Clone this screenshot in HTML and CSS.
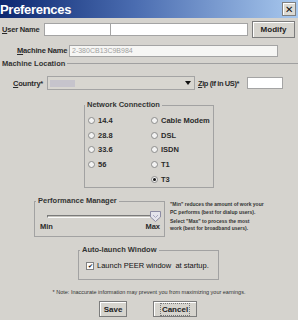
FILE: index.html
```html
<!DOCTYPE html>
<html lang="en">
<head>
    <meta charset="UTF-8">
    <title>Preferences</title>
    <link rel="stylesheet" href="styles.css">
</head>
<body>
    <div class="titlebar">
        <span class="title">Preferences</span>
        <span class="close">&#x2715;</span>
    </div>

    <div class="row user-row">
        <label class="lbl user-lbl"><u>U</u>ser Name</label>
        <input type="text" class="field f-first">
        <input type="text" class="field f-second">
        <button class="btn modify">Modify</button>
    </div>

    <div class="row machine-row">
        <label class="lbl machine-lbl"><u>M</u>achine Name</label>
        <input type="text" class="field machine" value="2-380CB13C9B984" disabled>
    </div>

    <div class="sep-title"><span>Machine Location</span></div>

    <div class="row country-row">
        <label class="lbl country-lbl"><u>C</u>ountry*</label>
        <div class="combo">
            <span class="combo-val"></span>
            <span class="arrow"></span>
        </div>
        <label class="lbl zip-lbl"><u>Z</u>ip (If in US)*</label>
        <input type="text" class="field zip">
    </div>

    <fieldset class="group network">
        <legend>Network Connection</legend>
        <div class="radio-cols">
            <div class="radio-col first-col">
                <div class="radio"><span class="dot"></span>14.4</div>
                <div class="radio"><span class="dot"></span>28.8</div>
                <div class="radio"><span class="dot"></span>33.6</div>
                <div class="radio"><span class="dot"></span>56</div>
            </div>
            <div class="radio-col">
                <div class="radio"><span class="dot"></span>Cable Modem</div>
                <div class="radio"><span class="dot"></span>DSL</div>
                <div class="radio"><span class="dot"></span>ISDN</div>
                <div class="radio"><span class="dot"></span>T1</div>
                <div class="radio"><span class="dot checked"></span>T3</div>
            </div>
        </div>
    </fieldset>

    <div class="perf-row">
        <fieldset class="group perf">
            <legend>Performance Manager</legend>
            <div class="slider">
                <span class="track"></span>
                <svg class="thumb" width="11" height="11" viewBox="0 0 11 11">
                    <path d="M0.5 0.5 H10.5 V6 L5.5 10.5 L0.5 6 Z" fill="#e4e4ec" stroke="#8c8ca4"/>
                    <path d="M3 4 L5.5 6.5 L8 4" fill="none" stroke="#a8a8c0"/>
                </svg>
            </div>
            <div class="slider-labels">
                <span>Min</span>
                <span>Max</span>
            </div>
        </fieldset>
        <div class="perf-help">
            <p>"Min" reduces the amount of work your<br>PC performs (best for dialup users).</p>
            <p>Select "Max" to process the most<br>work (best for broadband users).</p>
        </div>
    </div>

    <fieldset class="group autolaunch">
        <legend>Auto-launch Window</legend>
        <div class="check-row">
            <span class="checkbox">&#x2714;</span>
            <span>Launch PEER window &nbsp;at startup.</span>
        </div>
    </fieldset>

    <p class="note">* Note: Inaccurate information may prevent you from maximizing your earnings.</p>

    <div class="buttons">
        <button class="btn save">Save</button>
        <button class="btn cancel"><span class="focus">Cancel</span></button>
    </div>
</body>
</html>
```

FILE: styles.css
```css
* {
    box-sizing: border-box;
}
body {
    margin: 0;
    width: 298px;
    height: 320px;
    overflow: hidden;
    background-color: #d5d3ce;
    font-family: "Liberation Sans", Arial, sans-serif;
    font-size: 7.5px;
    font-weight: bold;
    color: #2a2a2a;
    white-space: nowrap;
}
.titlebar {
    height: 18px;
    display: flex;
    align-items: center;
    justify-content: space-between;
    padding-right: 2px;
    background: linear-gradient(90deg, #0c2870 0%, #4a6cb0 45%, #a8c8ee 100%);
}
.title {
    color: white;
    font-size: 13px;
    font-weight: 900;
    letter-spacing: -0.3px;
}
.close {
    width: 14px;
    height: 14px;
    display: flex;
    align-items: center;
    justify-content: center;
    background: #dcdad4;
    border: 1px solid #808080;
    box-shadow: inset 1px 1px #fff;
    color: #111;
    font-size: 10px;
    font-weight: normal;
}
.row {
    display: flex;
    align-items: center;
}
.lbl {
    letter-spacing: -0.2px;
}
.lbl u {
    text-decoration: underline;
}
.field {
    height: 13px;
    margin: 0;
    padding: 0 2px;
    border: 1px solid #a4a4a4;
    background: white;
    font-family: inherit;
    font-size: 7px;
}
.btn {
    margin: 0;
    padding: 0;
    background: #d6d4ce;
    border: 1px solid #7c7c7c;
    box-shadow: inset 1px 1px #fff;
    font-family: inherit;
    font-size: 8px;
    font-weight: bold;
    color: #222;
}
.user-row {
    margin-top: 3px;
    height: 17px;
    padding-left: 2px;
}
.user-lbl {
    width: 42px;
}
.f-first {
    width: 66px;
    border-right: none;
}
.f-second {
    width: 138px;
}
.modify {
    margin-left: 4px;
    width: 43px;
    height: 17px;
}
.machine-row {
    margin-top: 6px;
    height: 13px;
    padding-left: 17px;
}
.machine-lbl {
    width: 52px;
}
.machine {
    width: 209px;
    height: 12px;
    background: #f6f6f4;
    color: #a0a0a0;
    font-weight: normal;
}
.sep-title {
    display: flex;
    align-items: center;
    height: 12px;
    padding-left: 2px;
    color: #333;
}
.sep-title::after {
    content: "";
    flex: 1;
    height: 1px;
    margin-left: 2px;
    background: #a0a0a0;
}
.country-row {
    margin-top: 7px;
    height: 14px;
    padding-left: 13px;
}
.country-lbl {
    width: 34px;
}
.combo {
    width: 148px;
    height: 14px;
    display: flex;
    align-items: center;
    justify-content: space-between;
    border: 1px solid #a4a4a4;
    background: #d8d6d0;
    padding: 0 3px 0 2px;
}
.combo-val {
    width: 25px;
    height: 7px;
    background: #c6c4cc;
}
.arrow {
    width: 0;
    height: 0;
    border-left: 3px solid transparent;
    border-right: 3px solid transparent;
    border-top: 4px solid #111;
}
.zip-lbl {
    margin-left: 3px;
    width: 49px;
    letter-spacing: -0.4px;
}
.zip {
    width: 36px;
    height: 12px;
}
.group {
    margin: 0;
    padding: 0;
    border: 1px solid #a2a2a2;
    min-inline-size: 0;
}
.group legend {
    padding: 0 2px;
    margin: 0;
    line-height: 10px;
    height: 10px;
    color: #333;
}
.network {
    margin: 10px 0 0 84px;
    width: 130px;
    height: 88px;
}
.radio-cols {
    display: flex;
    padding: 3px 0 0 3px;
}
.radio-col {
    display: flex;
    flex-direction: column;
}
.first-col {
    width: 63px;
}
.radio {
    height: 14.75px;
    display: flex;
    align-items: center;
    gap: 3px;
}
.dot {
    width: 7px;
    height: 7px;
    border-radius: 50%;
    border: 1px solid #8c8c8c;
    background: #f2f2f2;
    display: flex;
    align-items: center;
    justify-content: center;
}
.dot.checked::after {
    content: "";
    width: 3px;
    height: 3px;
    border-radius: 50%;
    background: #111;
}
.perf-row {
    display: flex;
    align-items: flex-start;
    margin-top: 8px;
}
.perf {
    margin-left: 34px;
    width: 131px;
    height: 41px;
}
.perf legend {
    margin-left: 1px;
}
.slider {
    display: flex;
    align-items: center;
    height: 12px;
    margin-top: 4px;
    padding-left: 12px;
}
.track {
    width: 103px;
    height: 3px;
    border-top: 1px solid #7a7a7a;
    border-bottom: 1px solid #fafafa;
    border-left: 1px solid #7a7a7a;
    background: #c4c2bc;
}
.thumb {
    display: block;
}
.slider-labels {
    display: flex;
    justify-content: space-between;
    padding: 0 4px 0 5px;
    line-height: 9px;
    height: 9px;
}
.perf-help {
    margin: 5px 0 0 5px;
    font-size: 5px;
    line-height: 7.5px;
    color: #333;
}
.perf-help p {
    margin: 0 0 1.5px;
}
.autolaunch {
    margin: 8px 0 0 78px;
    width: 141px;
    height: 35px;
}
.autolaunch legend {
    margin-left: 1px;
}
.check-row {
    display: flex;
    align-items: center;
    height: 9px;
    margin-top: 6px;
    padding-left: 7px;
    gap: 3px;
    font-size: 7.5px;
    font-weight: normal;
    color: #111;
}
.checkbox {
    width: 8px;
    height: 8px;
    border: 1px solid #808080;
    background: #fbfbfb;
    display: flex;
    align-items: center;
    justify-content: center;
    font-size: 6px;
    line-height: 1;
    color: #111;
}
.note {
    margin: 8px 0 0;
    text-align: center;
    font-size: 5.5px;
    line-height: 8px;
    font-weight: normal;
    color: #333;
}
.buttons {
    display: flex;
    gap: 26px;
    margin-top: 5px;
    padding-left: 99px;
}
.save {
    width: 28px;
    height: 16px;
}
.cancel {
    width: 44px;
    height: 16px;
}
.focus {
    outline: 1px dotted #777;
    outline-offset: 1px;
}
```
